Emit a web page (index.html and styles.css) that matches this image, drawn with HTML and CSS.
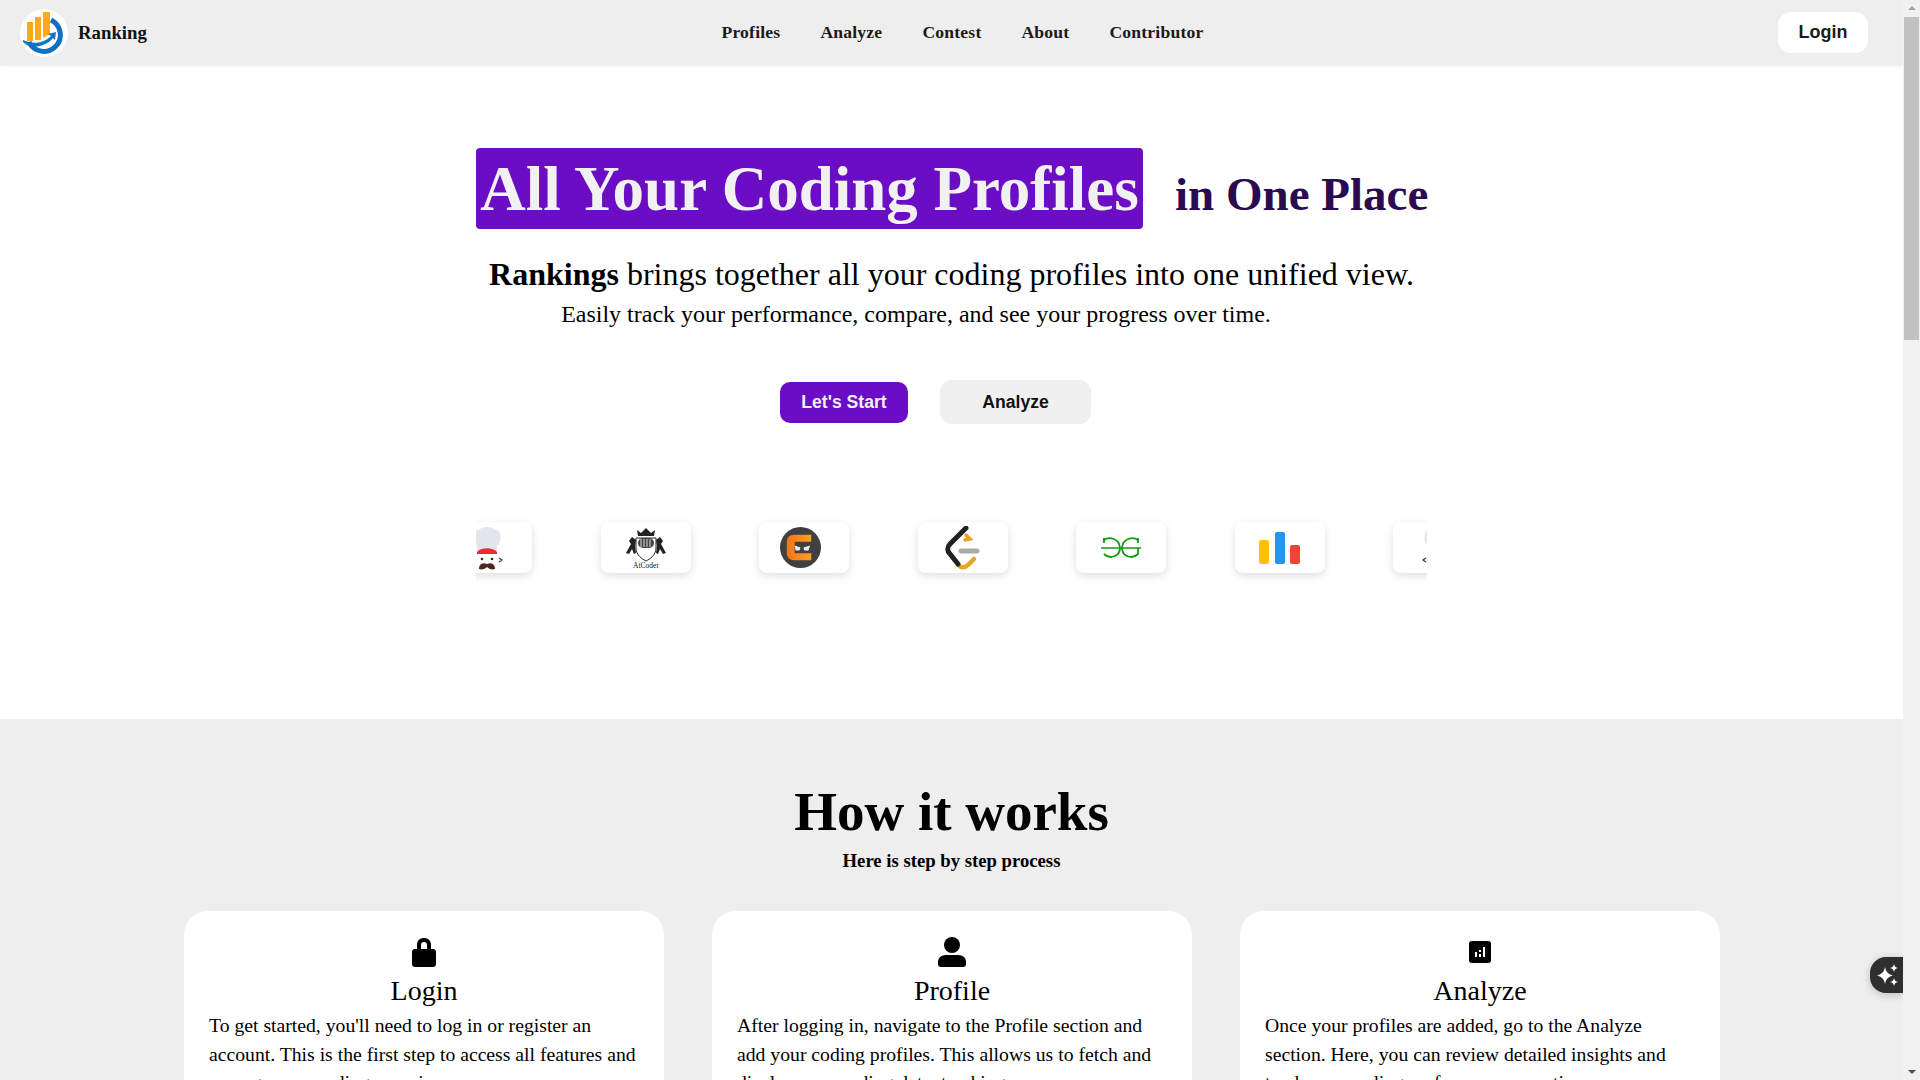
FILE: index.html
```html
<!DOCTYPE html>
<html lang="en">
<head>
    <meta charset="UTF-8">
    <meta name="viewport" content="width=device-width, initial-scale=1.0">
    <title>Ranking</title>
    <link rel="stylesheet" href="styles.css">
</head>
<body>
    <div class="page">
        <nav class="navbar">
            <div class="brand">
                <svg class="brand-logo" viewBox="0 0 48 48">
                    <circle cx="24" cy="24" r="24" fill="#fff"/>
                    <path d="M31 11 A16.500 16.500 0 1 1 9 33" fill="none" stroke="#0f6fc0" stroke-width="5"/>
                    <path d="M7 13 H13 V32 H7 Z M15 8 H21 V31 H15 Z M23 3 H30 V25 L23 29 Z" fill="#fcab14"/>
                    <path d="M3 31 C14 36 24 34 31 27 L28 25 L36 23 L35 31 L33 29 C26 38 10 41 3 33 Z" fill="#1374c4"/>
                </svg>
                <span class="brand-name">Ranking</span>
            </div>
            <ul class="nav-links">
                <li>Profiles</li>
                <li>Analyze</li>
                <li>Contest</li>
                <li>About</li>
                <li>Contributor</li>
            </ul>
            <a class="login-btn">Login</a>
        </nav>

        <section class="hero">
            <div class="hero-title">
                <h1 class="highlight">All Your Coding Profiles</h1>
                <h2 class="title-rest">in One Place</h2>
            </div>
            <p class="lead"><b>Rankings</b> brings together all your coding profiles into one unified view.</p>
            <p class="sublead">Easily track your performance, compare, and see your progress over time.</p>
            <div class="hero-btns">
                <a class="btn-start">Let's Start</a>
                <a class="btn-analyze">Analyze</a>
            </div>
            <div class="logo-strip">
                <div class="logo-track">
                    <div class="logo-card">
                        <svg class="chef" viewBox="0 0 40 44">
                            <path d="M10 20 C4 14 6 3 12 4 C15 0 25 0 28 4 C34 3 36 14 30 20 L30 24 L10 24 Z" fill="#e2e6ec"/>
                            <path d="M10 26 C14 21 26 21 30 26 L30 28 L10 28 Z" fill="#ee2a35"/>
                            <circle cx="15" cy="33" r="1.300" fill="#4a2a20"/>
                            <circle cx="25" cy="33" r="1.300" fill="#4a2a20"/>
                            <path d="M8 32 L5 34 L8 36 M32 32 L35 34 L32 36" fill="none" stroke="#4a2a20" stroke-width="1.200"/>
                            <path d="M20 38 C16 36 12 38 12 43 C15 44 18 43 20 41 C22 43 25 44 28 43 C28 38 24 36 20 38 Z" fill="#4a2a20"/>
                        </svg>
                    </div>
                    <div class="logo-card">
                        <svg class="atcoder" viewBox="0 0 44 44">
                            <path d="M13 4 L17 7 L22 2 L27 7 L31 4 L30 10 L14 10 Z" fill="#222"/>
                            <path d="M12 12 H32 V22 C32 29 26 33 22 35 C18 33 12 29 12 22 Z" fill="#fff" stroke="#222" stroke-width="1"/>
                            <rect x="14" y="12" width="16" height="10" rx="5" fill="#444"/>
                            <path d="M17 13 V21 M20 13 V21 M23 13 V21 M26 13 V21" stroke="#fff" stroke-width="0.800"/>
                            <path d="M8 11 L5 15 L7 18 L2 27 L5 28 L8 23 L10 28 L12 27 L11 20 L12 14 Z M36 11 L39 15 L37 18 L42 27 L39 28 L36 23 L34 28 L32 27 L33 20 L32 14 Z" fill="#222"/>
                            <text x="22" y="42" text-anchor="middle" class="atcoder-name">AtCoder</text>
                        </svg>
                    </div>
                    <div class="logo-card">
                        <svg class="codingninjas" viewBox="0 0 42 42">
                            <defs>
                                <linearGradient id="cn-grad" x1="0" x2="1" y1="0" y2="0">
                                    <stop offset="0" stop-color="#f7731c"/>
                                    <stop offset="1" stop-color="#f9a11b"/>
                                </linearGradient>
                            </defs>
                            <circle cx="21" cy="21" r="21" fill="#404040"/>
                            <path d="M14 8 H32 V15 H15 V27 H32 V34 H14 C10 34 7 31 7 27 V15 C7 11 10 8 14 8 Z" fill="url(#cn-grad)"/>
                            <path d="M15 19 L21 21 L20 24 H16 Z M31 19 L24 21 L25 24 H29 Z" fill="#eee"/>
                        </svg>
                    </div>
                    <div class="logo-card">
                        <svg class="leetcode" viewBox="0 0 36 44">
                            <path d="M21 9 L25 13 L20 14" fill="none" stroke="#e7a423" stroke-width="3.500" stroke-linecap="round"/>
                            <path d="M29 33 L23 39 C20 42 16 42 13 39" fill="none" stroke="#e7a423" stroke-width="4.500" stroke-linecap="round"/>
                            <path d="M21 2 L5 18 C2 21 2 25 5 28 L13 38" fill="none" stroke="#222" stroke-width="5" stroke-linecap="round"/>
                            <path d="M16 25 H32" stroke="#aaa" stroke-width="5" stroke-linecap="round"/>
                        </svg>
                    </div>
                    <div class="logo-card">
                        <svg class="gfg" viewBox="0 0 40 22">
                            <path d="M0 11 H40" stroke="#0f9b0f" stroke-width="1.400"/>
                            <path d="M3 1 V6 M3 3 C7 0 18 0 19 11 C19 19 9 23 3 17" fill="none" stroke="#0f9b0f" stroke-width="1.800"/>
                            <path d="M37 1 V6 M37 3 C33 0 22 0 21 11 C21 19 31 23 37 17 V11" fill="none" stroke="#0f9b0f" stroke-width="1.800"/>
                        </svg>
                    </div>
                    <div class="logo-card">
                        <svg class="bars" viewBox="0 0 42 32">
                            <rect x="0" y="8" width="10" height="24" rx="2" fill="#ffc107"/>
                            <rect x="16" y="0" width="10" height="32" rx="2" fill="#2196f3"/>
                            <rect x="31" y="13" width="10" height="19" rx="2" fill="#f44336"/>
                        </svg>
                    </div>
                    <div class="logo-card">
                        <svg class="chef" viewBox="0 0 40 44">
                            <path d="M10 20 C4 14 6 3 12 4 C15 0 25 0 28 4 C34 3 36 14 30 20 L30 24 L10 24 Z" fill="#e2e6ec"/>
                            <path d="M8 32 L5 34 L8 36" fill="none" stroke="#4a2a20" stroke-width="1.200"/>
                        </svg>
                    </div>
                </div>
            </div>
        </section>

        <section class="how">
            <h2 class="how-title">How it works</h2>
            <p class="how-sub">Here is step by step process</p>
            <div class="step-grid">
                <div class="step-card">
                    <svg class="step-icon" viewBox="0 0 24 30"><path fill-rule="evenodd" d="M5 12 V8 C5 3.500 8 1 12 1 C16 1 19 3.500 19 8 V12 H21 C22.500 12 24 13 24 15 V27 C24 29 22.500 30 21 30 H3 C1.500 30 0 29 0 27 V15 C0 13 1.500 12 3 12 Z M9 12 H15 V8 C15 6 14 5 12 5 C10 5 9 6 9 8 Z"/></svg>
                    <h3>Login</h3>
                    <p>To get started, you'll need to log in or register an<br>account. This is the first step to access all features and<br>manage your coding experience.</p>
                </div>
                <div class="step-card">
                    <svg class="step-icon" viewBox="0 0 28 30"><circle cx="14" cy="8" r="8"/><path d="M8 18 H20 C25 18 28 21 28 25 V27 C28 29 27 30 25 30 H3 C1 30 0 29 0 27 V25 C0 21 3 18 8 18 Z"/></svg>
                    <h3>Profile</h3>
                    <p>After logging in, navigate to the Profile section and<br>add your coding profiles. This allows us to fetch and<br>display your coding data, tracking</p>
                </div>
                <div class="step-card">
                    <svg class="step-icon step-icon-small" viewBox="0 0 22 22"><path fill-rule="evenodd" d="M3 0 H19 C21 0 22 1 22 3 V19 C22 21 21 22 19 22 H3 C1 22 0 21 0 19 V3 C0 1 1 0 3 0 Z M6 11 V16 H8 V11 Z M10 13 V16 H12 V13 Z M10 9 V11 H12 V9 Z M14 6 V16 H16 V6 Z"/></svg>
                    <h3>Analyze</h3>
                    <p>Once your profiles are added, go to the Analyze<br>section. Here, you can review detailed insights and<br>track your coding performance over time.</p>
                </div>
            </div>
            <div class="ai-btn">
                <svg viewBox="0 0 24 24" width="24" height="24" fill="#fff">
                    <path d="M9 4 C10 9 12 11 17 12.500 C12 14 10 16 9 21 C8 16 6 14 1 12.500 C6 11 8 9 9 4 Z"/>
                    <path d="M18 1 C18.500 3.500 19.500 4.500 22 5 C19.500 5.500 18.500 6.500 18 9 C17.500 6.500 16.500 5.500 14 5 C16.500 4.500 17.500 3.500 18 1 Z"/>
                    <path d="M18 15 C18.500 17.500 19.500 18.500 22 19 C19.500 19.500 18.500 20.500 18 23 C17.500 20.500 16.500 19.500 14 19 C16.500 18.500 17.500 17.500 18 15 Z"/>
                </svg>
            </div>
        </section>
    </div>

    <div class="scrollbar">
        <span class="arrow-up"></span>
        <span class="thumb"></span>
        <span class="arrow-down"></span>
    </div>
</body>
</html>
```

FILE: styles.css
```css
* {
    box-sizing: border-box;
}
html, body {
    margin: 0;
    height: 100%;
    overflow: hidden;
}
body {
    display: flex;
    background: #fff;
    color: #000;
    font-family: "Liberation Serif", serif;
}
.page {
    flex: 1;
    min-width: 0;
    height: 1080px;
    overflow: hidden;
}

/* navbar */
.navbar {
    height: 65px;
    background: #eeeeee;
    display: flex;
    align-items: center;
    justify-content: space-between;
    padding: 0 35px 0 20px;
    box-shadow: 0 1px 4px rgba(0, 0, 0, 0.08);
    position: relative;
}
.brand {
    display: flex;
    align-items: center;
    gap: 10px;
}
.brand-logo {
    width: 48px;
    height: 48px;
}
.brand-name {
    font-size: 18.800px;
    font-weight: bold;
    color: #111;
}
.nav-links {
    display: flex;
    gap: 40px;
    list-style: none;
    margin: 0;
    padding: 0;
    font-size: 17.600px;
    font-weight: bold;
    letter-spacing: 0.2px;
    color: #1a1a1a;
}
.login-btn {
    width: 90px;
    height: 41px;
    background: #fff;
    border-radius: 13px;
    display: flex;
    align-items: center;
    justify-content: center;
    font-family: "Liberation Sans", sans-serif;
    font-weight: bold;
    font-size: 18px;
    color: #1a1a1a;
}

/* hero */
.hero {
    height: 654px;
    padding-top: 83px;
    display: flex;
    flex-direction: column;
    align-items: center;
}
.hero-title {
    width: 951px;
    display: flex;
    align-items: flex-end;
    gap: 32px;
    white-space: nowrap;
}
.highlight {
    margin: 0;
    flex: none;
    width: 667px;
    height: 81px;
    line-height: 83px;
    text-align: center;
    background: #6a0dc4;
    border-radius: 4px;
    color: #f1f1f1;
    font-size: 63px;
}
.title-rest {
    margin: 0 0 7px;
    font-size: 47px;
    line-height: 55px;
    color: #2a0a50;
}
.lead {
    margin: 26px 0 0;
    font-size: 32px;
    line-height: 38px;
    white-space: nowrap;
}
.sublead {
    margin: 6px 71px 0 0;
    font-size: 24px;
    line-height: 30px;
    white-space: nowrap;
}
.hero-btns {
    margin: 51px 32px 0 0;
    display: flex;
    align-items: center;
    gap: 32px;
    font-family: "Liberation Sans", sans-serif;
    font-weight: bold;
    font-size: 17.600px;
}
.btn-start {
    width: 128px;
    height: 41px;
    border-radius: 10px;
    background: #6a0dc4;
    color: #f1f1f1;
    display: flex;
    align-items: center;
    justify-content: center;
}
.btn-analyze {
    width: 151px;
    height: 44px;
    border-radius: 12px;
    background: #f0f0f0;
    color: #111;
    display: flex;
    align-items: center;
    justify-content: center;
}
.logo-strip {
    width: 951px;
    margin-top: 88px;
    overflow: hidden;
    padding: 10px 0 20px;
}
.logo-track {
    display: flex;
    gap: 68.500px;
    margin-left: -34px;
}
.logo-card {
    flex: none;
    width: 90px;
    height: 51px;
    background: #fff;
    border-radius: 8px;
    box-shadow: 0 3px 8px rgba(0, 0, 0, 0.13);
    display: flex;
    align-items: center;
    justify-content: center;
}
.chef {
    width: 40px;
    height: 44px;
}
.atcoder {
    width: 44px;
    height: 44px;
}
.atcoder-name {
    font-size: 7.500px;
    fill: #111;
}
.codingninjas {
    width: 41px;
    height: 41px;
    margin-right: 8px;
}
.leetcode {
    width: 36px;
    height: 44px;
}
.gfg {
    width: 40px;
    height: 22px;
}
.bars {
    width: 42px;
    height: 32px;
}

/* how it works */
.how {
    background: #eeeeee;
    height: 400px;
    padding-top: 63px;
    position: relative;
    text-align: center;
}
.how-title {
    margin: 0;
    font-size: 55px;
    line-height: 60px;
    font-weight: bold;
}
.how-sub {
    margin: 7px 0 0;
    font-size: 18.700px;
    line-height: 24px;
    font-weight: bold;
}
.step-grid {
    margin: 38px 0 0 184px;
    display: grid;
    grid-template-columns: repeat(3, 480px);
    gap: 48px;
}
.step-card {
    background: #fff;
    border-radius: 24px;
    padding: 26px 25px 25px;
    height: 300px;
    text-align: left;
}
.step-icon {
    display: block;
    margin: 0 auto;
    height: 30px;
}
.step-icon-small {
    height: 22px;
    margin: 4px auto 8px;
}
.step-card h3 {
    margin: 4px 0 0;
    font-size: 28px;
    line-height: 40px;
    font-weight: normal;
    text-align: center;
}
.step-card p {
    margin: 0;
    font-size: 19.700px;
    line-height: 28.500px;
    white-space: nowrap;
}
.ai-btn {
    position: absolute;
    right: 0;
    top: 238px;
    width: 33px;
    height: 36px;
    background: #2f2f2f;
    border-radius: 16px 0 0 16px;
    display: flex;
    align-items: center;
    padding-left: 6px;
    box-shadow: 0 2px 8px rgba(0, 0, 0, 0.2);
}

/* scrollbar on the right */
.scrollbar {
    flex: none;
    width: 17px;
    background: #f1f1f1;
    display: flex;
    flex-direction: column;
    align-items: center;
    position: relative;
}
.arrow-up {
    margin-top: 6px;
    border-left: 4px solid transparent;
    border-right: 4px solid transparent;
    border-bottom: 4px solid #a3a3a3;
}
.thumb {
    margin-top: 7px;
    width: 15px;
    height: 323px;
    background: #c1c1c1;
}
.arrow-down {
    margin-top: auto;
    margin-bottom: 6px;
    border-left: 4px solid transparent;
    border-right: 4px solid transparent;
    border-top: 4px solid #505050;
}
```
